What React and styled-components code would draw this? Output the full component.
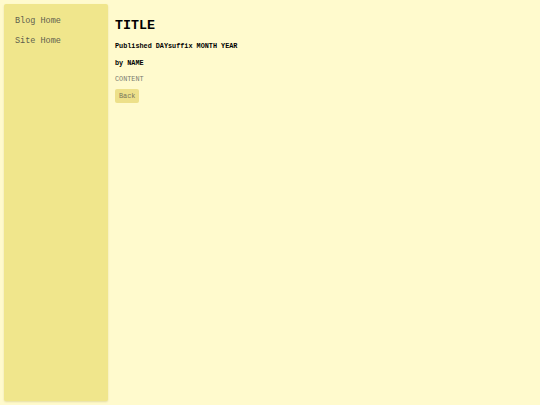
import React from "react";
import styled, { createGlobalStyle } from "styled-components";

const FONT = `"Courier New", Courier, "Nimbus Mono PS", "Nimbus Mono L", FreeMono, "Liberation Mono", monospace`;

const Global = createGlobalStyle`
  html, body { margin: 0; padding: 0; background: #fffacd; }
  body { font-family: ${FONT}; }
  * { box-sizing: border-box; }
`;

const Page = styled.div`
  display: flex;
  gap: 7px;
  padding: 4px;
  height: 405px;
  background: #fffacd;
`;

const Sidebar = styled.nav`
  width: 104px;
  flex-shrink: 0;
  background: #f0e68c;
  border-radius: 2px;
  box-shadow: 0 1px 2px rgba(180, 170, 90, 0.35);
  padding: 12px 11px;
  display: flex;
  flex-direction: column;
  gap: 10px;
`;

const NavLink = styled.a`
  font-size: 8.5px;
  line-height: 10px;
  color: #5f5f4f;
  text-decoration: none;
  white-space: nowrap;
`;

const Main = styled.main`
  flex: 1;
  padding-top: 15px;
  display: flex;
  flex-direction: column;
  align-items: flex-start;
`;

const Title = styled.h1`
  margin: 0;
  font-size: 13.3px;
  line-height: 14px;
  font-weight: bold;
  color: #000;
`;

const Meta = styled.p`
  margin: ${(p) => p.$mt}px 0 0;
  font-size: 6.8px;
  line-height: 8px;
  font-weight: bold;
  color: #000;
  white-space: nowrap;
`;

const Content = styled.p`
  margin: 8px 0 0;
  font-size: 6.8px;
  line-height: 8px;
  color: #7a7a70;
`;

const BackButton = styled.button`
  margin-top: 6px;
  height: 14px;
  padding: 0 4px;
  border: none;
  border-radius: 2px;
  background: #ede08a;
  color: #77745a;
  font-family: ${FONT};
  font-size: 6.8px;
  line-height: 14px;
`;

export default function App() {
  return (
    <>
      <Global />
      <Page>
        <Sidebar>
          <NavLink href="#">Blog Home</NavLink>
          <NavLink href="#">Site Home</NavLink>
        </Sidebar>
        <Main>
          <Title>TITLE</Title>
          <Meta $mt={9}>Published DAYsuffix MONTH YEAR</Meta>
          <Meta $mt={9}>by NAME</Meta>
          <Content>CONTENT</Content>
          <BackButton>Back</BackButton>
        </Main>
      </Page>
    </>
  );
}
